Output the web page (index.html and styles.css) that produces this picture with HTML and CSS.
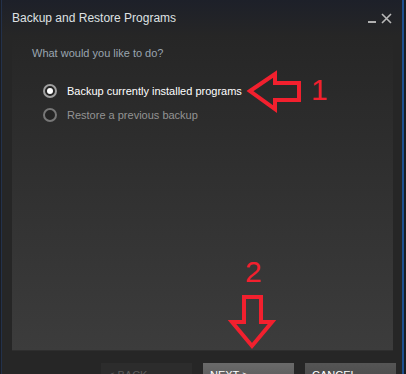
FILE: index.html
```html
<!DOCTYPE html>
<html lang="en">
<head>
  <meta charset="UTF-8">
  <title>Backup and Restore Programs</title>
  <link rel="stylesheet" href="styles.css">
</head>
<body>
  <div class="window">
    <header class="titlebar">
      <span class="title">Backup and Restore Programs</span>
      <span class="controls">
        <span class="minimize"></span>
        <svg class="close" width="11" height="11" viewBox="0 0 11 11">
          <path d="M1 1 L10 10 M10 1 L1 10" stroke="#b8b8b8" stroke-width="1.6"/>
        </svg>
      </span>
    </header>

    <main class="panel">
      <p class="question">What would you like to do?</p>
      <div class="options">
        <label class="option selected">
          <span class="radio"></span>
          <span>Backup currently installed programs</span>
        </label>
        <label class="option">
          <span class="radio"></span>
          <span>Restore a previous backup</span>
        </label>
      </div>
    </main>

    <footer class="buttons">
      <button class="btn back">&lt; BACK</button>
      <button class="btn next">NEXT &gt;</button>
      <button class="btn cancel">CANCEL</button>
    </footer>

    <!-- red hand-drawn annotations over the dialog -->
    <svg class="notes" width="406" height="374" viewBox="0 0 406 374">
      <polygon points="250,91 275,74 275,83 299,83 299,100 275,100 275,109"
               fill="none" stroke="#f2202e" stroke-width="4" stroke-linejoin="miter"/>
      <text x="311" y="100" class="num">1</text>
      <text x="245" y="282" class="num">2</text>
      <polygon points="244,297 261,297 261,322 272,322 252,346 232,322 244,322"
               fill="none" stroke="#f2202e" stroke-width="4" stroke-linejoin="miter"/>
    </svg>
  </div>
</body>
</html>
```

FILE: styles.css
```css
html, body {
  margin: 0;
  padding: 0;
  background-color: #1a1c22;
}

body {
  width: 406px;
  height: 374px;
  overflow: hidden;
  font-family: Arial, "Liberation Sans", sans-serif;
}

.window {
  position: relative;
  width: 400px;
  height: 374px;
  margin-left: 1px;
  border-left: 1px solid #23314a;
  border-right: 2px solid #1f4f8e;
  background-color: #262626;
  display: flex;
  flex-direction: column;
  overflow: hidden;
}

.titlebar {
  flex-shrink: 0;
  height: 36px;
  display: flex;
  justify-content: space-between;
  align-items: flex-start;
  padding: 12px 10px 0 10px;
  box-sizing: border-box;
  background: linear-gradient(#1d2029, #262626);
}

.title {
  color: #dfe1e3;
  font-size: 12px;
  line-height: 12px;
}

.controls {
  display: flex;
  align-items: flex-end;
  gap: 5px;
  margin-top: 1px;
}

.minimize {
  width: 8px;
  height: 2px;
  background-color: #b0b0b0;
  margin-bottom: 1px;
}

.close {
  display: block;
}

.panel {
  flex-shrink: 0;
  margin: 0 9px 0 10px;
  height: 315px;
  box-sizing: border-box;
  padding: 11px 20px 0 20px;
  background: linear-gradient(#262626, #3c3c3c);
  border-bottom: 1px solid #2e2e2e;
}

.question {
  margin: 0;
  color: #9aa5b0;
  font-size: 11px;
  line-height: 12px;
}

.options {
  display: flex;
  flex-direction: column;
  gap: 10px;
  margin-top: 25px;
  padding-left: 11px;
}

.option {
  display: flex;
  align-items: center;
  gap: 10px;
  height: 14px;
  color: #939393;
  font-size: 11px;
}

.option.selected {
  color: #ffffff;
}

.radio {
  width: 10px;
  height: 10px;
  border: 2px solid #777777;
  border-radius: 50%;
  background-color: #242424;
  display: flex;
  align-items: center;
  justify-content: center;
}

.selected .radio {
  border-color: #a0a0a0;
}

.selected .radio::after {
  content: "";
  width: 6px;
  height: 6px;
  border-radius: 50%;
  background-color: #ffffff;
}

.buttons {
  flex-shrink: 0;
  display: flex;
  justify-content: flex-end;
  gap: 11px;
  padding: 12px 6px 0 0;
}

.btn {
  flex-shrink: 0;
  width: 91px;
  height: 24px;
  border: none;
  padding: 6px 0 0 7px;
  font-family: Arial, "Liberation Sans", sans-serif;
  font-size: 11px;
  color: #ffffff;
  display: flex;
  align-items: flex-start;
}

.back {
  background-color: #2c2c2c;
  color: #5c5c5c;
}

.next {
  background: linear-gradient(#6a6a6a, #555555);
}

.cancel {
  background: linear-gradient(#555555, #474747);
}

.notes {
  position: absolute;
  top: 0;
  left: -2px;
  pointer-events: none;
}

.num {
  fill: #f2202e;
  font-family: "Liberation Sans", Arial, sans-serif;
  font-size: 30px;
}
```
